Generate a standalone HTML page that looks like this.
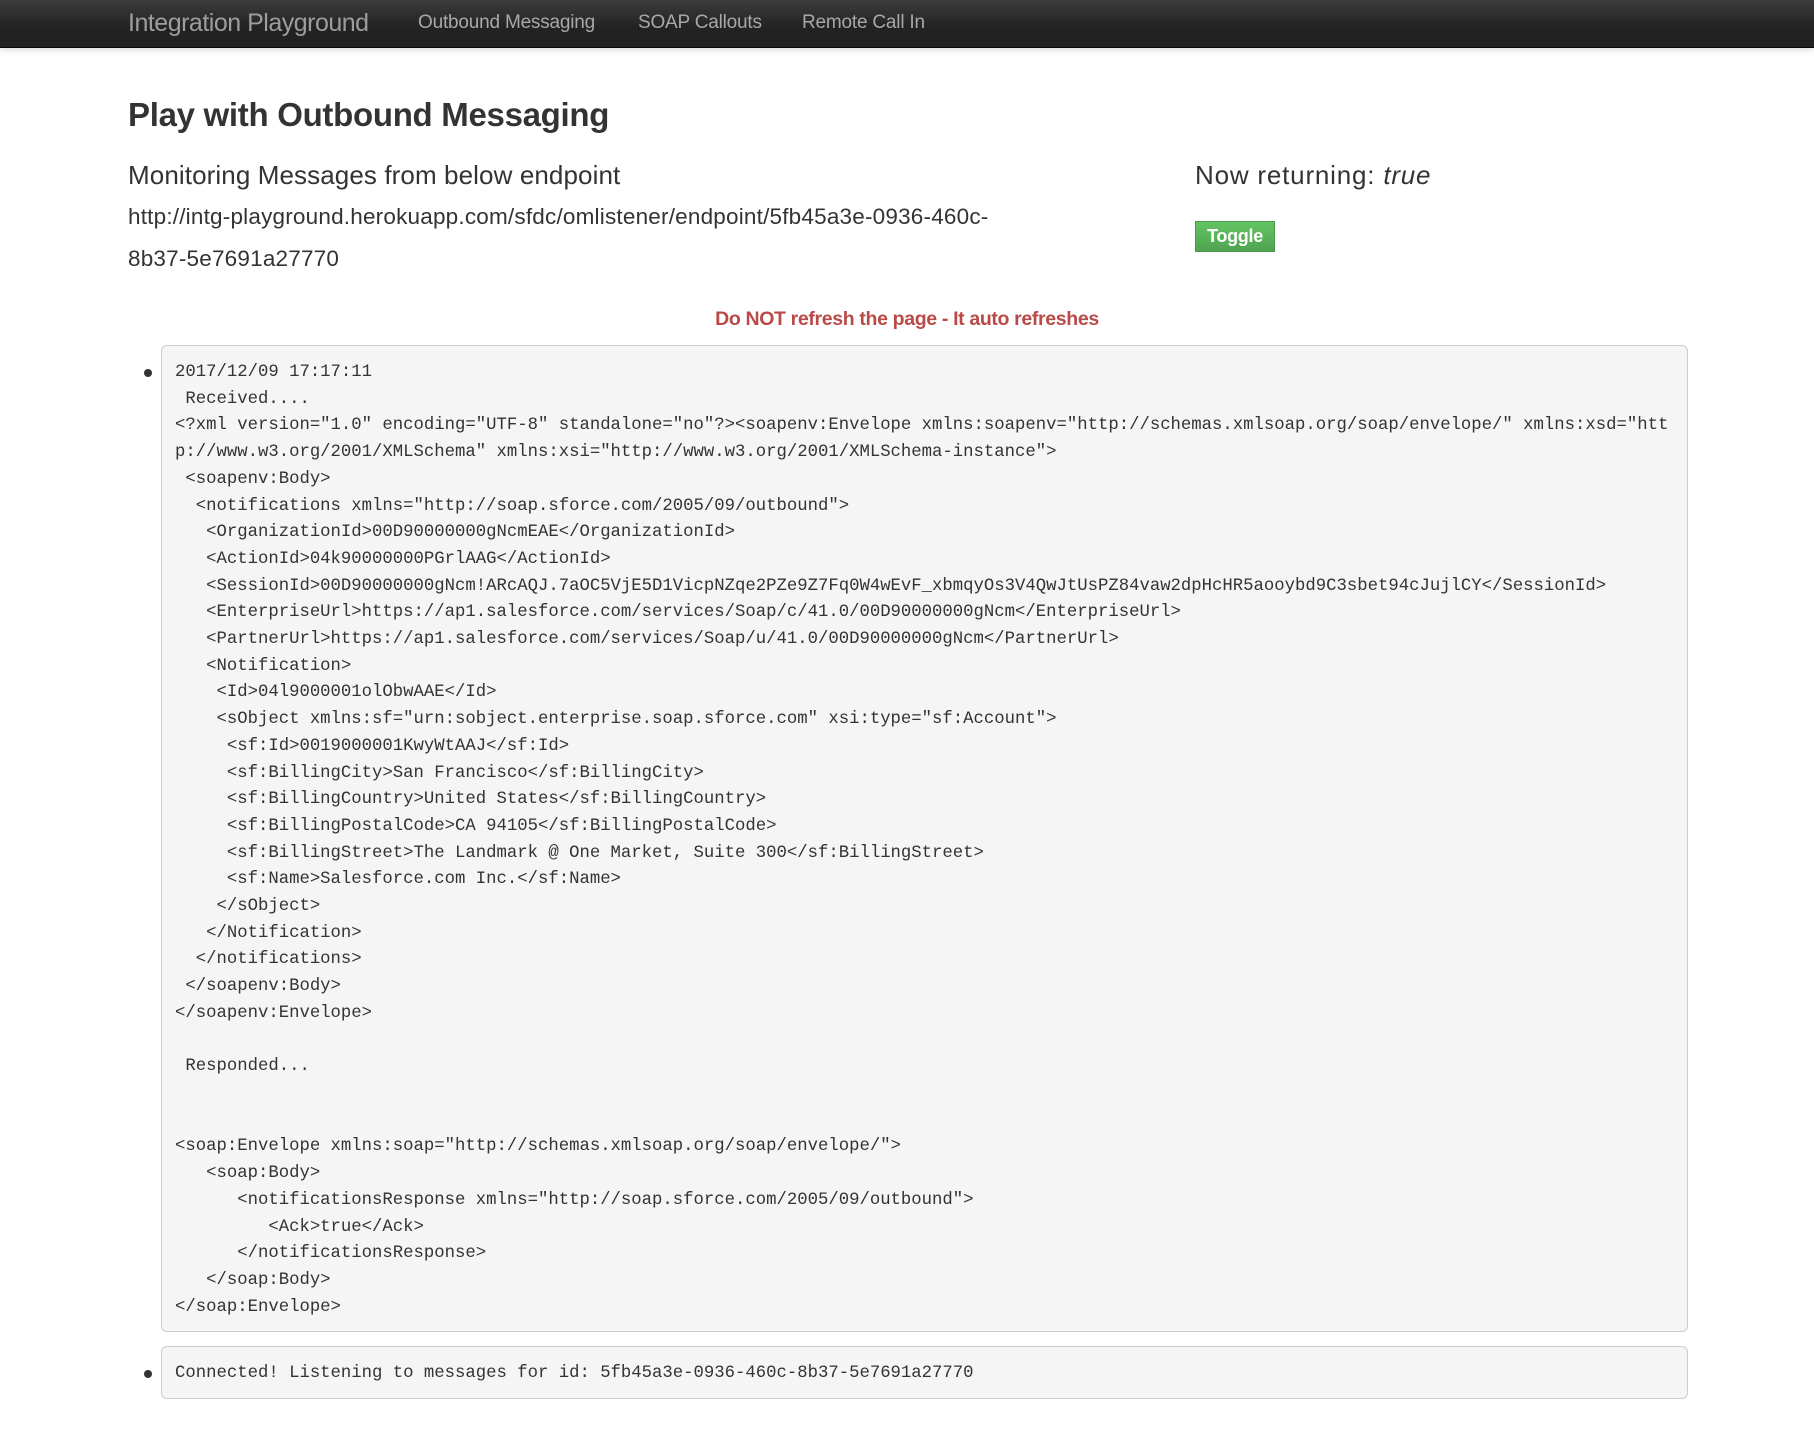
<!DOCTYPE html>
<html><head><meta charset="utf-8"><style>
*{margin:0;padding:0;box-sizing:border-box}
body{width:1814px;height:1448px;background:#fff;font-family:"Liberation Sans",Arial,sans-serif;color:#333;position:relative;overflow:hidden}
.nav{position:absolute;left:0;top:0;width:1814px;height:48px;background:linear-gradient(#3c3c3c,#222 60%);border-bottom:1px solid #080808;box-shadow:0 2px 6px rgba(0,0,0,.15)}
.nav span{position:absolute;color:#9d9d9d;white-space:nowrap}
.brand{left:128px;top:9px;font-size:25px;letter-spacing:-0.5px}
.ni{top:12px;font-size:19px;letter-spacing:-0.2px;color:#a8a8a8!important}
.a{position:absolute;white-space:nowrap}
h3{position:absolute;left:128px;top:96px;font-size:33px;font-weight:bold;letter-spacing:-0.3px}
.lead{font-size:26px;letter-spacing:0.1px;font-weight:normal}
.url{font-size:22.5px;letter-spacing:0.2px}
.btn{position:absolute;left:1195px;top:221px;width:80px;height:31px;background:linear-gradient(#62c462,#51a351);border:1px solid #4a9a4a;color:#fff;font-weight:bold;font-size:18px;text-align:center;line-height:29px;letter-spacing:-0.3px}
.warn{position:absolute;left:0;width:1814px;top:308px;text-align:center;color:#b94a48;font-weight:bold;font-size:19.5px;letter-spacing:-0.35px}
.pre{position:absolute;left:161px;width:1527px;background:#f5f5f5;border:1px solid #ccc;border-radius:6px;padding:14px 0 12px 13px;font-family:"Liberation Mono","DejaVu Sans Mono",monospace;font-size:17.3px;line-height:26.7px;white-space:pre;color:#333;overflow:hidden}
.dot{position:absolute;left:144px;width:8px;height:8px;border-radius:50%;background:#333}
</style></head><body>
<div class="nav">
<span class="brand">Integration Playground</span>
<span class="ni" style="left:418px">Outbound Messaging</span>
<span class="ni" style="left:638px">SOAP Callouts</span>
<span class="ni" style="left:802px">Remote Call In</span>
</div>
<h3>Play with Outbound Messaging</h3>
<div class="a lead" style="left:128px;top:160px">Monitoring Messages from below endpoint</div>
<div class="a url" style="left:128px;top:204px">http://intg-playground.herokuapp.com/sfdc/omlistener/endpoint/5fb45a3e-0936-460c-</div>
<div class="a url" style="left:128px;top:246px">8b37-5e7691a27770</div>
<div class="a lead" style="left:1195px;top:160px;letter-spacing:0.8px">Now returning: <i>true</i></div>
<div class="btn">Toggle</div>
<div class="warn">Do NOT refresh the page - It auto refreshes</div>
<div class="dot" style="top:369px"></div>
<div class="pre" style="top:345px;height:987px">2017/12/09 17:17:11
 Received....
&lt;?xml version="1.0" encoding="UTF-8" standalone="no"?&gt;&lt;soapenv:Envelope xmlns:soapenv="http://schemas.xmlsoap.org/soap/envelope/" xmlns:xsd="htt
p://www.w3.org/2001/XMLSchema" xmlns:xsi="http://www.w3.org/2001/XMLSchema-instance"&gt;
 &lt;soapenv:Body&gt;
  &lt;notifications xmlns="http://soap.sforce.com/2005/09/outbound"&gt;
   &lt;OrganizationId&gt;00D90000000gNcmEAE&lt;/OrganizationId&gt;
   &lt;ActionId&gt;04k90000000PGrlAAG&lt;/ActionId&gt;
   &lt;SessionId&gt;00D90000000gNcm!ARcAQJ.7aOC5VjE5D1VicpNZqe2PZe9Z7Fq0W4wEvF_xbmqyOs3V4QwJtUsPZ84vaw2dpHcHR5aooybd9C3sbet94cJujlCY&lt;/SessionId&gt;
   &lt;EnterpriseUrl&gt;https://ap1.salesforce.com/services/Soap/c/41.0/00D90000000gNcm&lt;/EnterpriseUrl&gt;
   &lt;PartnerUrl&gt;https://ap1.salesforce.com/services/Soap/u/41.0/00D90000000gNcm&lt;/PartnerUrl&gt;
   &lt;Notification&gt;
    &lt;Id&gt;04l9000001olObwAAE&lt;/Id&gt;
    &lt;sObject xmlns:sf="urn:sobject.enterprise.soap.sforce.com" xsi:type="sf:Account"&gt;
     &lt;sf:Id&gt;0019000001KwyWtAAJ&lt;/sf:Id&gt;
     &lt;sf:BillingCity&gt;San Francisco&lt;/sf:BillingCity&gt;
     &lt;sf:BillingCountry&gt;United States&lt;/sf:BillingCountry&gt;
     &lt;sf:BillingPostalCode&gt;CA 94105&lt;/sf:BillingPostalCode&gt;
     &lt;sf:BillingStreet&gt;The Landmark @ One Market, Suite 300&lt;/sf:BillingStreet&gt;
     &lt;sf:Name&gt;Salesforce.com Inc.&lt;/sf:Name&gt;
    &lt;/sObject&gt;
   &lt;/Notification&gt;
  &lt;/notifications&gt;
 &lt;/soapenv:Body&gt;
&lt;/soapenv:Envelope&gt;

 Responded...


&lt;soap:Envelope xmlns:soap="http://schemas.xmlsoap.org/soap/envelope/"&gt;
   &lt;soap:Body&gt;
      &lt;notificationsResponse xmlns="http://soap.sforce.com/2005/09/outbound"&gt;
         &lt;Ack&gt;true&lt;/Ack&gt;
      &lt;/notificationsResponse&gt;
   &lt;/soap:Body&gt;
&lt;/soap:Envelope&gt;</div>
<div class="dot" style="top:1370px"></div>
<div class="pre" style="top:1346px;height:53px">Connected! Listening to messages for id: 5fb45a3e-0936-460c-8b37-5e7691a27770</div>
</body></html>
